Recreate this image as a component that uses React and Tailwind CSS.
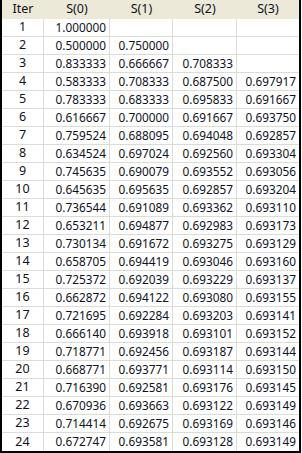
import React from "react";

const rows = [
  ["1.000000", "", "", ""],
  ["0.500000", "0.750000", "", ""],
  ["0.833333", "0.666667", "0.708333", ""],
  ["0.583333", "0.708333", "0.687500", "0.697917"],
  ["0.783333", "0.683333", "0.695833", "0.691667"],
  ["0.616667", "0.700000", "0.691667", "0.693750"],
  ["0.759524", "0.688095", "0.694048", "0.692857"],
  ["0.634524", "0.697024", "0.692560", "0.693304"],
  ["0.745635", "0.690079", "0.693552", "0.693056"],
  ["0.645635", "0.695635", "0.692857", "0.693204"],
  ["0.736544", "0.691089", "0.693362", "0.693110"],
  ["0.653211", "0.694877", "0.692983", "0.693173"],
  ["0.730134", "0.691672", "0.693275", "0.693129"],
  ["0.658705", "0.694419", "0.693046", "0.693160"],
  ["0.725372", "0.692039", "0.693229", "0.693137"],
  ["0.662872", "0.694122", "0.693080", "0.693155"],
  ["0.721695", "0.692284", "0.693203", "0.693141"],
  ["0.666140", "0.693918", "0.693101", "0.693152"],
  ["0.718771", "0.692456", "0.693187", "0.693144"],
  ["0.668771", "0.693771", "0.693114", "0.693150"],
  ["0.716390", "0.692581", "0.693176", "0.693145"],
  ["0.670936", "0.693663", "0.693122", "0.693149"],
  ["0.714414", "0.692675", "0.693169", "0.693146"],
  ["0.672747", "0.693581", "0.693128", "0.693149"],
];

const cols = "grid grid-cols-[42px_66px_63px_64px_62px]";

export default function App() {
  return (
    <div className="w-[302px] h-[453px] bg-white overflow-hidden" style={{ fontFamily: '"Noto Sans", "Open Sans", sans-serif' }}>
      <div className="w-[301px] border-l-2 border-r-2 border-b-2 border-black text-[12px] leading-none text-[#10121c]">
        <div className={`${cols} h-[19px] bg-[#ECE9D8]`}>
          {["Iter", "S(0)", "S(1)", "S(2)", "S(3)"].map((h) => (
            <div key={h} className="flex items-center justify-center text-[12.5px] pb-[1px]">
              {h}
            </div>
          ))}
        </div>
        {rows.map((r, i) => (
          <div key={i} className={`${cols} h-[18px] border-b border-[#DCDBD5] last:border-b-0`}>
            <div className="flex items-center justify-center border-r border-[#DCDBD5] text-[12.5px]">{i + 1}</div>
            {r.map((v, j) => (
              <div
                key={j}
                className={`flex items-center justify-end pr-[3px] text-[11.8px] ${j < 3 ? "border-r border-[#DCDBD5]" : ""}`}
              >
                {v}
              </div>
            ))}
          </div>
        ))}
      </div>
    </div>
  );
}
